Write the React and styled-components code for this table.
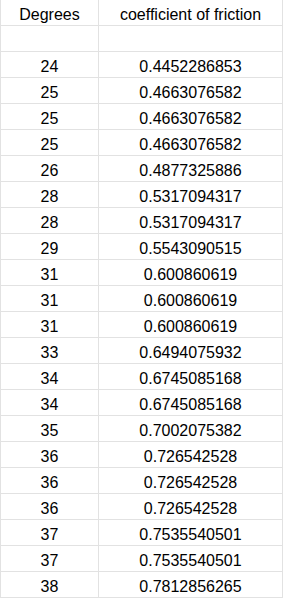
import styled, { createGlobalStyle } from "styled-components"

const GlobalStyle = createGlobalStyle`
    body {
        margin: 0;
        background: #ffffff;
    }
`

const rows = [
    [24, "0.4452286853"],
    [25, "0.4663076582"],
    [25, "0.4663076582"],
    [25, "0.4663076582"],
    [26, "0.4877325886"],
    [28, "0.5317094317"],
    [28, "0.5317094317"],
    [29, "0.5543090515"],
    [31, "0.600860619"],
    [31, "0.600860619"],
    [31, "0.600860619"],
    [33, "0.6494075932"],
    [34, "0.6745085168"],
    [34, "0.6745085168"],
    [35, "0.7002075382"],
    [36, "0.726542528"],
    [36, "0.726542528"],
    [36, "0.726542528"],
    [37, "0.7535540501"],
    [37, "0.7535540501"],
    [38, "0.7812856265"],
]

export default function App() {
    return (
        <>
            <GlobalStyle />
            <Sheet>
                <Cell>Degrees</Cell>
                <Cell>coefficient of friction</Cell>
                <Cell />
                <Cell />
                {rows.map(([deg, mu], i) => (
                    <Row key={i}>
                        <Cell>{deg}</Cell>
                        <Cell>{mu}</Cell>
                    </Row>
                ))}
            </Sheet>
        </>
    )
}

const Sheet = styled.div`
    width: 283px;
    display: grid;
    grid-template-columns: 98px 184px;
    border-left: 1px solid #e2e2e2;
    font-family: "Liberation Sans", Arial, sans-serif;
    font-size: 16px;
    color: #000000;
    box-sizing: border-box;
`

const Row = styled.div`
    display: contents;
`

const Cell = styled.div`
    height: 26px;
    box-sizing: border-box;
    padding-top: 4px;
    line-height: 21px;
    text-align: center;
    white-space: nowrap;
    border-right: 1px solid #e2e2e2;
    border-bottom: 1px solid #e2e2e2;
`
